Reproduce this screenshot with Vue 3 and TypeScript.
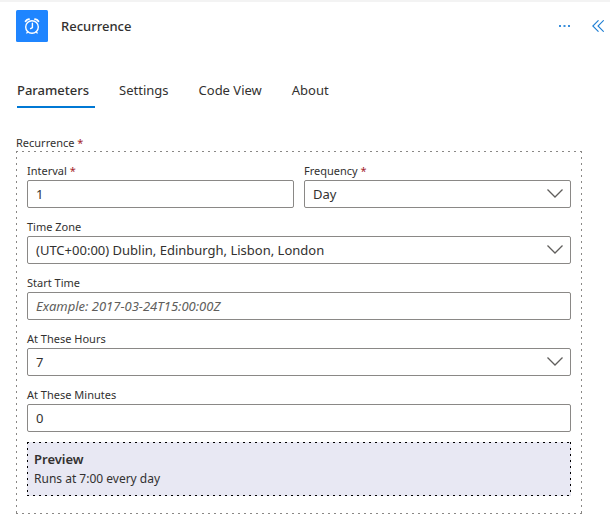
<script setup lang="ts">
import { ref } from 'vue'

const tabs: string[] = ['Parameters', 'Settings', 'Code View', 'About']
const activeTab = ref('Parameters')
const interval = ref('1')
const frequency = ref('Day')
const timeZone = ref('(UTC+00:00) Dublin, Edinburgh, Lisbon, London')
const startTime = ref('')
const hours = ref('7')
const minutes = ref('0')
</script>

<template>
  <main class="panel">
    <header class="header">
      <svg class="logo" viewBox="0 0 32 32" aria-hidden="true">
        <rect width="32" height="32" rx="1.5" fill="#1f85ff" />
        <g fill="none" stroke="#fff" stroke-width="1.4" stroke-linecap="round">
          <circle cx="16" cy="17" r="6.3" />
          <path d="M16.4 13.2V17.5L14.6 18.6" />
          <path d="M9.6 11.2Q10.8 9.4 13 9.1M22.4 11.2Q21.2 9.4 19 9.1" stroke-width="1.9" />
          <path d="M11.8 21.8L10.9 22.9M20.2 21.8L21.1 22.9" />
        </g>
      </svg>
      <h1 class="title">Recurrence</h1>
      <button class="icon-button" type="button" aria-label="More commands">
        <svg width="12" height="12" viewBox="0 0 12 12" fill="#3a8fdc">
          <rect x="0" y="5" width="2" height="2" />
          <rect x="4.5" y="5" width="2" height="2" />
          <rect x="9" y="5" width="2" height="2" />
        </svg>
      </button>
      <button class="icon-button" type="button" aria-label="Collapse">
        <svg width="12" height="12" viewBox="0 0 12 12" fill="none" stroke="#1f7fd4" stroke-width="1.1">
          <path d="M6.5 0.3L0.8 6L6.5 11.7M11.7 0.3L6 6L11.7 11.7" />
        </svg>
      </button>
    </header>

    <nav class="tabs" role="tablist">
      <button
        v-for="tab in tabs"
        :key="tab"
        class="tab"
        :class="{ active: tab === activeTab }"
        type="button"
        role="tab"
        :aria-selected="tab === activeTab"
        @click="activeTab = tab"
      >{{ tab }}</button>
    </nav>

    <form class="content" @submit.prevent>
      <h2 class="label">Recurrence <span class="required">*</span></h2>
      <div class="group dotted">
        <div class="row">
          <div class="field">
            <label class="label" for="interval">Interval <span class="required">*</span></label>
            <input id="interval" v-model="interval" class="control" type="text" />
          </div>
          <div class="field">
            <label class="label" for="frequency">Frequency <span class="required">*</span></label>
            <div class="select-wrap">
              <select id="frequency" v-model="frequency" class="control">
                <option>Day</option>
              </select>
              <svg class="chevron" viewBox="0 0 16 9"><path d="M0.5 0.5L8 8L15.5 0.5" /></svg>
            </div>
          </div>
        </div>
        <div class="field">
          <label class="label" for="zone">Time Zone</label>
          <div class="select-wrap">
            <select id="zone" v-model="timeZone" class="control">
              <option>(UTC+00:00) Dublin, Edinburgh, Lisbon, London</option>
            </select>
            <svg class="chevron" viewBox="0 0 16 9"><path d="M0.5 0.5L8 8L15.5 0.5" /></svg>
          </div>
        </div>
        <div class="field">
          <label class="label" for="start">Start Time</label>
          <input id="start" v-model="startTime" class="control" type="text" placeholder="Example: 2017-03-24T15:00:00Z" />
        </div>
        <div class="field">
          <label class="label" for="hours">At These Hours</label>
          <div class="select-wrap">
            <select id="hours" v-model="hours" class="control">
              <option>7</option>
            </select>
            <svg class="chevron" viewBox="0 0 16 9"><path d="M0.5 0.5L8 8L15.5 0.5" /></svg>
          </div>
        </div>
        <div class="field">
          <label class="label" for="minutes">At These Minutes</label>
          <input id="minutes" v-model="minutes" class="control" type="text" />
        </div>
        <section class="preview dotted">
          <h3 class="preview-title">Preview</h3>
          <p class="preview-text">Runs at 7:00 every day</p>
        </section>
      </div>
    </form>
  </main>
</template>

<style>
body {
  margin: 0;
  background: #fff;
}
</style>

<style scoped>
.panel {
  border-top: 2px solid #f3f3f3;
  color: #323130;
  font-family: "Noto Sans", "Open Sans", sans-serif;
  font-size: 13px;
  line-height: 20px;
}

button,
input,
select {
  font: inherit;
  color: inherit;
}

h1,
h2,
h3,
p {
  margin: 0;
}

.header {
  display: flex;
  align-items: center;
  gap: 13px;
  padding: 8px 2px 0 16px;
}

.logo {
  width: 32px;
  height: 32px;
}

.title {
  flex: 1;
  font-size: 13px;
  font-weight: 500;
}

.icon-button {
  display: flex;
  padding: 4px;
  border: 0;
  background: none;
}

.tabs {
  display: flex;
  gap: 24px;
  padding: 30px 17px 0;
}

.tab {
  padding: 8px 6px 6px 0;
  border: 0;
  border-bottom: 2px solid transparent;
  background: none;
}

.tab.active {
  border-color: #0078d4;
  font-weight: 500;
}

.content {
  padding: 26px 28px 0 16px;
}

.label {
  display: block;
  font-size: 11px;
  font-weight: 400;
  line-height: 17px;
}

.required {
  color: #a4262c;
}

.dotted {
  --line: #8a8886;
  background-image:
    repeating-linear-gradient(90deg, var(--line) 0 2px, transparent 2px 6px),
    repeating-linear-gradient(90deg, var(--line) 0 2px, transparent 2px 6px),
    repeating-linear-gradient(180deg, var(--line) 0 2px, transparent 2px 6px),
    repeating-linear-gradient(180deg, var(--line) 0 2px, transparent 2px 6px);
  background-position: top, bottom, left, right;
  background-repeat: no-repeat;
  background-size: 100% 1px, 100% 1px, 1px 100%, 1px 100%;
}

.group {
  display: flex;
  flex-direction: column;
  gap: 10px;
  padding: 11px 11px 18px;
}

.row {
  display: grid;
  grid-template-columns: 1fr 1fr;
  gap: 10px;
}

.field {
  display: grid;
  min-width: 0;
  gap: 1px;
}

.control {
  box-sizing: border-box;
  width: 100%;
  height: 28px;
  padding: 0 8px;
  border: 1px solid #8a8886;
  border-radius: 2px;
  background: #fff;
  appearance: none;
}

.control::placeholder {
  color: #605e5c;
  font-style: italic;
  opacity: 1;
}

.select-wrap {
  display: grid;
  align-items: center;
}

.select-wrap > * {
  grid-area: 1 / 1;
}

.chevron {
  justify-self: end;
  width: 16px;
  height: 9px;
  margin: 0 8px 2px 0;
  fill: none;
  stroke: #605e5c;
  stroke-width: 1.3;
  pointer-events: none;
}

.preview {
  --line: #000;
  padding: 7px;
  background-color: #e8e8f3;
}

.preview-title {
  font-size: 13px;
  font-weight: 600;
}

.preview-text {
  font-size: 12px;
}
</style>
